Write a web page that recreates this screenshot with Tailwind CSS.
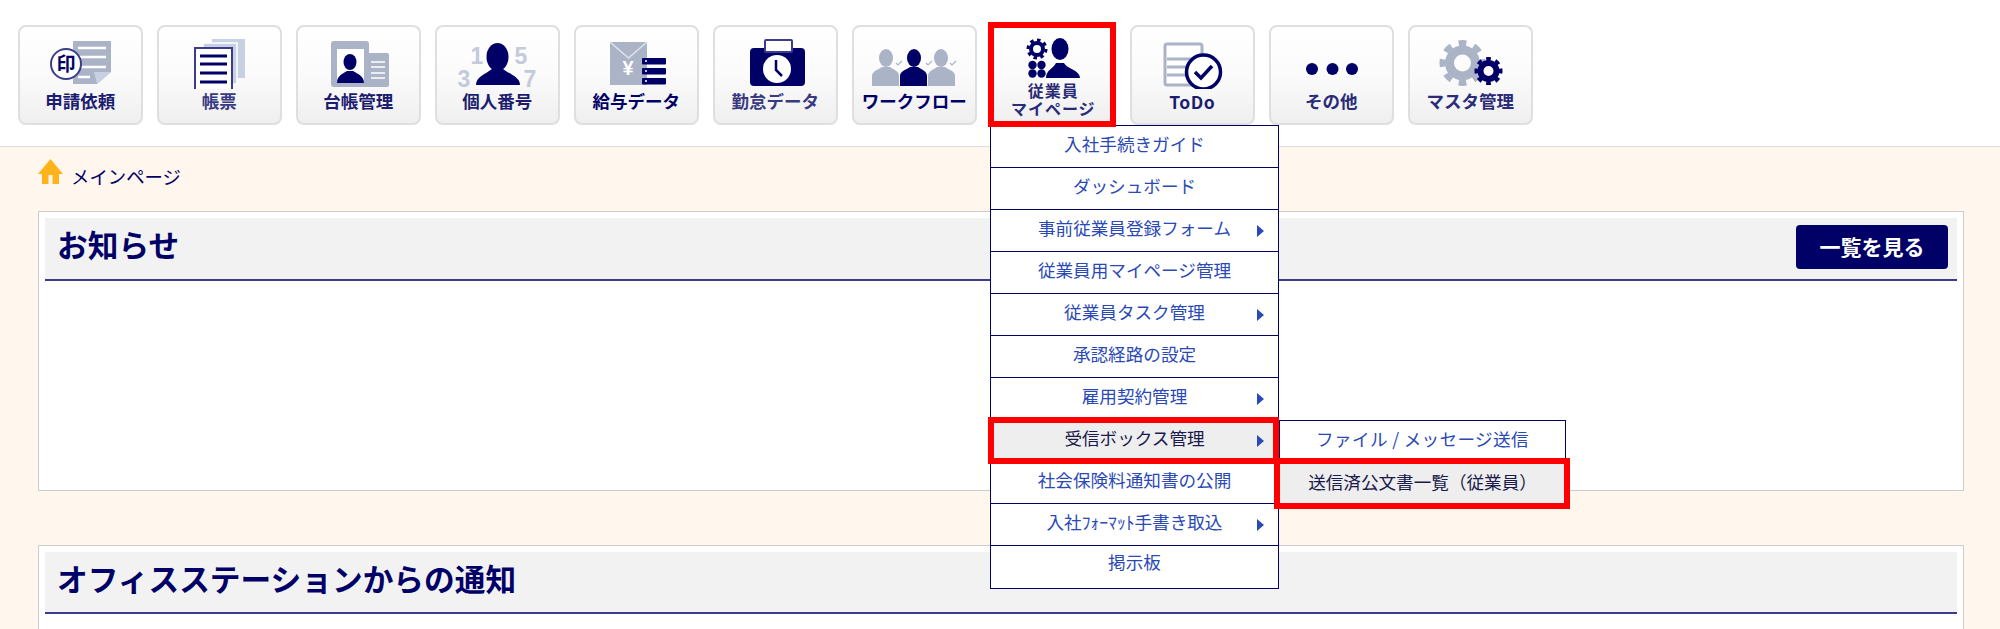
<!DOCTYPE html>
<html lang="ja">
<head>
  <meta charset="UTF-8">
  <title>メインページ</title>
  <script src="https://cdn.jsdelivr.net/npm/@tailwindcss/browser@4"></script>
</head>
<body class="bg-white font-['Noto_Sans_CJK_JP',sans-serif] text-[#000066]">
  <div class="relative w-[2000px] h-[629px] overflow-hidden">

    <!-- top navigation -->
    <nav class="h-[147px] border-b border-[#dddddd] bg-white pt-[25px] pl-[18px] flex items-start gap-[14.5px]">

      <a class="w-[124.5px] h-[100px] shrink-0 rounded-lg border-2 border-[#dfdfdf] bg-gradient-to-b from-white via-[#fbfbfb] to-[#efefef] flex flex-col items-center">
        <svg width="120" height="62" viewBox="2 2 120 62" class="block shrink-0">
          <path d="M55 16H93V47L79 59H55Z" fill="#abb3c6"/>
          <path d="M93 47L79 59L76 47Z" fill="#c8d1e3"/>
          <path d="M60 23H88M60 32H88M60 42H88M60 52H72" stroke="#fff" stroke-width="2.5"/>
          <circle cx="48" cy="39" r="15" fill="#fff" stroke="#3c3c8c" stroke-width="2"/>
          <text x="48" y="46" text-anchor="middle" font-size="19" font-weight="700" fill="#000066">印</text>
        </svg>
        <span class="text-[17.5px] font-bold leading-[24px] text-[#1d1d70]">申請依頼</span>
      </a>

      <a class="w-[124.5px] h-[100px] shrink-0 rounded-lg border-2 border-[#dfdfdf] bg-gradient-to-b from-white via-[#fbfbfb] to-[#efefef] flex flex-col items-center">
        <svg width="120" height="62" viewBox="2 2 120 62" class="block shrink-0">
          <rect x="55" y="14" width="33" height="39" fill="#c8d1e3"/>
          <rect x="46" y="18" width="34" height="41" fill="#c8d1e3" stroke="#fff" stroke-width="1.5"/>
          <rect x="38" y="23" width="37" height="42" fill="#fff" stroke="#3c3c8c" stroke-width="2"/>
          <path d="M43 31H70M43 39H70M43 48H70M43 57H70" stroke="#000066" stroke-width="3"/>
        </svg>
        <span class="text-[17.5px] font-bold leading-[24px] text-[#3a3a82]">帳票</span>
      </a>

      <a class="w-[124.5px] h-[100px] shrink-0 rounded-lg border-2 border-[#dfdfdf] bg-gradient-to-b from-white via-[#fbfbfb] to-[#efefef] flex flex-col items-center">
        <svg width="120" height="62" viewBox="2 2 120 62" class="block shrink-0">
          <rect x="69" y="28" width="24" height="34" rx="2" fill="#abb3c6"/>
          <path d="M75 37H89M75 42H89M75 48H89M75 53H89" stroke="#fff" stroke-width="1.5"/>
          <rect x="35" y="16" width="38" height="46" rx="3" fill="#abb3c6"/>
          <rect x="41" y="24" width="27" height="34" fill="#fff"/>
          <ellipse cx="54" cy="37" rx="6.5" ry="8" fill="#000066"/>
          <path d="M41 58C41 51 46 49 51 46H57C62 49 68 51 68 58Z" fill="#000066"/>
        </svg>
        <span class="text-[17.5px] font-bold leading-[24px] text-[#1d1d70]">台帳管理</span>
      </a>

      <a class="w-[124.5px] h-[100px] shrink-0 rounded-lg border-2 border-[#dfdfdf] bg-gradient-to-b from-white via-[#fbfbfb] to-[#efefef] flex flex-col items-center">
        <svg width="120" height="68" viewBox="2 2 120 68" class="block shrink-0 -mb-[6px]">
          <g font-size="23" font-weight="700" fill="#c3cadb" text-anchor="middle" font-family="Liberation Sans">
            <text x="42" y="39">1</text>
            <text x="86" y="39">5</text>
            <text x="29" y="62">3</text>
            <text x="95" y="62">7</text>
          </g>
          <ellipse cx="62.5" cy="32" rx="11" ry="14" fill="#000066"/>
          <path d="M41 60C41 52 49 50 57 44H68C76 50 85 52 85 60Z" fill="#000066"/>
        </svg>
        <span class="text-[17.5px] font-bold leading-[24px] text-[#1d1d70]">個人番号</span>
      </a>

      <a class="w-[124.5px] h-[100px] shrink-0 rounded-lg border-2 border-[#dfdfdf] bg-gradient-to-b from-white via-[#fbfbfb] to-[#efefef] flex flex-col items-center">
        <svg width="120" height="62" viewBox="2 2 120 62" class="block shrink-0">
          <rect x="36" y="17" width="37" height="43" fill="#abb3c6"/>
          <path d="M36 17L54.5 33L73 17" fill="none" stroke="#dfe3ec" stroke-width="1.5"/>
          <text x="54" y="50" text-anchor="middle" font-size="20" font-weight="700" fill="#fff" font-family="Liberation Sans">¥</text>
          <g fill="#000066">
            <rect x="68" y="33" width="24" height="6.5" rx="1"/>
            <rect x="68" y="43" width="24" height="6.5" rx="1"/>
            <rect x="68" y="53" width="24" height="6.5" rx="1"/>
          </g>
          <path d="M71 36H73M71 46H73M71 56H73" stroke="#fff" stroke-width="1.5"/>
        </svg>
        <span class="text-[17.5px] font-bold leading-[24px] text-[#000066]">給与データ</span>
      </a>

      <a class="w-[124.5px] h-[100px] shrink-0 rounded-lg border-2 border-[#dfdfdf] bg-gradient-to-b from-white via-[#fbfbfb] to-[#efefef] flex flex-col items-center">
        <svg width="120" height="62" viewBox="2 2 120 62" class="block shrink-0">
          <rect x="37" y="23" width="55" height="38" rx="4" fill="#000066"/>
          <rect x="52" y="15" width="27" height="12" rx="1" fill="#fff" stroke="#3c3c8c" stroke-width="2"/>
          <circle cx="64" cy="44" r="14" fill="#fff"/>
          <path d="M63 35V45L69 51" fill="none" stroke="#000066" stroke-width="2.5"/>
        </svg>
        <span class="text-[17.5px] font-bold leading-[24px] text-[#3a3a82]">勤怠データ</span>
      </a>

      <a class="w-[124.5px] h-[100px] shrink-0 rounded-lg border-2 border-[#dfdfdf] bg-gradient-to-b from-white via-[#fbfbfb] to-[#efefef] flex flex-col items-center">
        <svg width="120" height="62" viewBox="2 2 120 62" class="block shrink-0">
          <g fill="#abb3c6">
            <ellipse cx="34" cy="33" rx="7" ry="9"/>
            <path d="M20 61V51C20 46 26 45 30 42H38C42 45 47 46 47 51V61Z"/>
            <ellipse cx="89" cy="33" rx="7" ry="9"/>
            <path d="M76 61V51C76 46 81 45 85 42H93C97 45 103 46 103 51V61Z"/>
          </g>
          <ellipse cx="62" cy="33" rx="7" ry="9" fill="#000066"/>
          <path d="M48 61V51C48 46 54 45 58 42H66C70 45 75 46 75 51V61Z" fill="#000066"/>
          <path d="M44 38L46 40L50 36M74 38L76 40L80 36M98 38L100 40L104 36" fill="none" stroke="#abb3c6" stroke-width="1.2"/>
        </svg>
        <span class="text-[17.5px] font-bold leading-[24px] text-[#000066]">ワークフロー</span>
      </a>

      <a class="w-[124.5px] h-[100px] shrink-0 rounded-lg border-2 border-[#dfdfdf] bg-gradient-to-b from-white via-[#fbfbfb] to-[#efefef] flex flex-col items-center">
        <svg width="120" height="54" viewBox="2 2 120 54" class="block shrink-0">
          <circle cx="46" cy="24" r="6" fill="none" stroke="#000066" stroke-width="4"/>
          <circle cx="46" cy="24" r="9" fill="none" stroke="#000066" stroke-width="3" pathLength="16" stroke-dasharray="1 1"/>
          <g fill="#000066">
            <circle cx="41.5" cy="40" r="4.2"/>
            <circle cx="50.5" cy="40" r="4.2"/>
            <circle cx="41.5" cy="48.5" r="4.2"/>
            <circle cx="50.5" cy="48.5" r="4.2"/>
            <ellipse cx="69" cy="24" rx="8.5" ry="11"/>
            <path d="M55 53C55 45 62 44 65 38H73C76 44 89 45 89 53Z"/>
          </g>
        </svg>
        <span class="text-[16px] font-bold leading-[18px] tracking-[1px] text-[#2b2b78] text-center">従業員<br>マイページ</span>
      </a>

      <a class="w-[124.5px] h-[100px] shrink-0 rounded-lg border-2 border-[#dfdfdf] bg-gradient-to-b from-white via-[#fbfbfb] to-[#efefef] flex flex-col items-center">
        <svg width="120" height="62" viewBox="2 2 120 62" class="block shrink-0">
          <rect x="35" y="19" width="37" height="41" rx="2" fill="#fff" stroke="#abb3c6" stroke-width="3"/>
          <path d="M37 34H62M37 42H58M37 50H58" stroke="#abb3c6" stroke-width="3"/>
          <circle cx="73.5" cy="47" r="17" fill="#fff" stroke="#000066" stroke-width="3.5"/>
          <path d="M65 47L71 53L82 41" fill="none" stroke="#000066" stroke-width="3.5"/>
        </svg>
        <span class="text-[17.5px] font-bold leading-[26px] tracking-[0.5px] text-[#1d1d70]">ToDo</span>
      </a>

      <a class="w-[124.5px] h-[100px] shrink-0 rounded-lg border-2 border-[#dfdfdf] bg-gradient-to-b from-white via-[#fbfbfb] to-[#efefef] flex flex-col items-center">
        <svg width="120" height="62" viewBox="2 2 120 62" class="block shrink-0">
          <g fill="#000066">
            <circle cx="43" cy="44" r="6"/>
            <circle cx="63.5" cy="44" r="6"/>
            <circle cx="83" cy="44" r="6"/>
          </g>
        </svg>
        <span class="text-[17.5px] font-bold leading-[24px] text-[#2b2b78]">その他</span>
      </a>

      <a class="w-[124.5px] h-[100px] shrink-0 rounded-lg border-2 border-[#dfdfdf] bg-gradient-to-b from-white via-[#fbfbfb] to-[#efefef] flex flex-col items-center">
        <svg width="120" height="62" viewBox="2 2 120 62" class="block shrink-0">
          <circle cx="54.5" cy="38" r="13" fill="none" stroke="#abb3c6" stroke-width="9"/>
          <circle cx="54.5" cy="38" r="20" fill="none" stroke="#abb3c6" stroke-width="6" pathLength="16" stroke-dasharray="1 1" stroke-dashoffset="0.5"/>
          <circle cx="80.5" cy="46" r="8" fill="none" stroke="#000066" stroke-width="6"/>
          <circle cx="80.5" cy="46" r="12" fill="none" stroke="#000066" stroke-width="4" pathLength="16" stroke-dasharray="1 1" stroke-dashoffset="0.5"/>
        </svg>
        <span class="text-[17.5px] font-bold leading-[24px] text-[#2b2b78]">マスタ管理</span>
      </a>
    </nav>

    <!-- page body -->
    <main class="h-[482px] bg-[#fff7ee] pl-[38px] pr-[36px]">
      <div class="h-[64px] flex items-start gap-[8px] pt-[12px]">
        <svg width="25" height="25" viewBox="0 0 25 25" class="block shrink-0">
          <path d="M12.5 0L25 15H21V25H14.5V16H10.5V25H4V15H0Z" fill="#ffb31a"/>
        </svg>
        <span class="text-[18.4px] leading-[35px] text-[#000066]">メインページ</span>
      </div>

      <section class="h-[280px] border border-[#cccccc] bg-white p-[6px]">
        <div class="h-[63px] bg-[#f2f2f2] border-b-2 border-[#3c3c8c] flex items-center justify-between pl-[12px] pr-[9px]">
          <h2 class="text-[30.7px] font-bold leading-none pb-[8px] text-[#000066]">お知らせ</h2>
          <a class="w-[152px] h-[44px] rounded bg-[#000066] text-white text-[21px] font-bold flex items-center justify-center mb-[4px]">一覧を見る</a>
        </div>
      </section>

      <section class="mt-[54px] h-[120px] border border-[#cccccc] bg-white p-[6px]">
        <div class="h-[62px] bg-[#f2f2f2] border-b-2 border-[#3c3c8c] flex items-center pl-[12px]">
          <h2 class="text-[30.7px] font-bold leading-none pb-[8px] text-[#000066]">オフィスステーションからの通知</h2>
        </div>
      </section>
    </main>

    <!-- open dropdown menu -->
    <ul class="absolute left-[990px] top-[125px] w-[289px] border border-[#000066] bg-white text-[17.6px] text-[#2a49b5] divide-y divide-[#000066]">
      <li class="h-[42px] flex items-center justify-center pb-1">入社手続きガイド</li>
      <li class="h-[42px] flex items-center justify-center pb-1">ダッシュボード</li>
      <li class="relative h-[42px] flex items-center justify-center pb-1">事前従業員登録フォーム
        <span class="absolute right-[14px] top-[15px] border-y-[6px] border-y-transparent border-l-[7px] border-l-[#2a49b5]"></span>
      </li>
      <li class="h-[42px] flex items-center justify-center pb-1">従業員用マイページ管理</li>
      <li class="relative h-[42px] flex items-center justify-center pb-1">従業員タスク管理
        <span class="absolute right-[14px] top-[15px] border-y-[6px] border-y-transparent border-l-[7px] border-l-[#2a49b5]"></span>
      </li>
      <li class="h-[42px] flex items-center justify-center pb-1">承認経路の設定</li>
      <li class="relative h-[42px] flex items-center justify-center pb-1">雇用契約管理
        <span class="absolute right-[14px] top-[15px] border-y-[6px] border-y-transparent border-l-[7px] border-l-[#2a49b5]"></span>
      </li>
      <li class="relative h-[42px] flex items-center justify-center pb-1 bg-[#eeeeee] text-[#1a1a4c]">受信ボックス管理
        <span class="absolute right-[14px] top-[15px] border-y-[6px] border-y-transparent border-l-[7px] border-l-[#2a49b5]"></span>
        <ul class="absolute left-[288px] top-0 w-[287px] border border-[#000066] bg-white text-[#2a49b5] divide-y divide-[#000066]">
          <li class="h-[42px] flex items-center justify-center pb-1 tracking-[0.35px]">ファイル / メッセージ送信</li>
          <li class="h-[42px] flex items-center justify-center pb-1 bg-[#eeeeee] text-[#1a1a4c]">送信済公文書一覧（従業員）</li>
        </ul>
      </li>
      <li class="h-[42px] flex items-center justify-center pb-1">社会保険料通知書の公開</li>
      <li class="relative h-[42px] flex items-center justify-center pb-1">入社ﾌｫｰﾏｯﾄ手書き取込
        <span class="absolute right-[14px] top-[15px] border-y-[6px] border-y-transparent border-l-[7px] border-l-[#2a49b5]"></span>
      </li>
      <li class="h-[42px] flex items-center justify-center pb-[10px]">掲示板</li>
    </ul>

    <!-- red annotation boxes -->
    <div class="absolute left-[988px] top-[22px] w-[128px] h-[105px] border-[6px] border-[#ff0000]"></div>
    <div class="absolute left-[988px] top-[417px] w-[291px] h-[47px] border-[6px] border-[#ff0000]"></div>
    <div class="absolute left-[1274px] top-[458px] w-[296px] h-[51px] border-[6px] border-[#ff0000]"></div>
  </div>
</body>
</html>
